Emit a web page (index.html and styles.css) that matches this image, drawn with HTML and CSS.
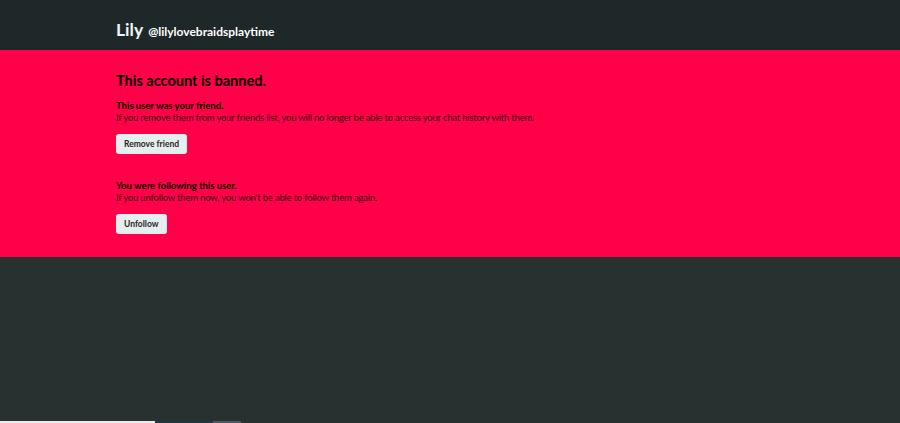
FILE: index.html
```html
<!DOCTYPE html>
<html lang="en">
<head>
    <meta charset="UTF-8">
    <meta name="viewport" content="width=device-width, initial-scale=1.0">
    <title>Lily - Banned</title>
    <link rel="stylesheet" href="styles.css">
</head>
<body>
    <div class="header">
        <div class="wrap">
            <span class="name">Lily</span>
            <span class="handle">@lilylovebraidsplaytime</span>
        </div>
    </div>

    <div class="banned">
        <div class="wrap">
            <h1>This account is banned.</h1>

            <div class="notice">
                <p class="notice-title">This user was your friend.</p>
                <p>If you remove them from your friends list, you will no longer be able to access your chat history with them.</p>
                <button class="action-btn">Remove friend</button>
            </div>

            <div class="notice">
                <p class="notice-title">You were following this user.</p>
                <p>If you unfollow them now, you won't be able to follow them again.</p>
                <button class="action-btn">Unfollow</button>
            </div>
        </div>
    </div>

    <div class="taskbar">
        <span class="tb-white"></span>
        <span class="tb-teal"></span>
        <span class="tb-grey"></span>
    </div>
</body>
</html>
```

FILE: styles.css
```css
* {
    margin: 0;
    padding: 0;
    box-sizing: border-box;
}

body {
    font-family: Lato, 'Liberation Sans', sans-serif;
    background: #293130;
    min-height: 100vh;
}

.wrap {
    padding-left: 116px;
}

.header {
    background: #1f2828;
    height: 50px;
    display: flex;
    align-items: center;
}

.header .wrap {
    display: flex;
    align-items: baseline;
    gap: 5px;
    padding-top: 8px;
}

.name {
    font-size: 17.5px;
    font-weight: 700;
    color: #eef6fb;
}

.handle {
    font-size: 12px;
    font-weight: 700;
    color: #ffffff;
}

.banned {
    background: #ff0049;
    height: 207px;
    padding-top: 22px;
    color: #000;
}

.banned h1 {
    font-size: 14.5px;
    font-weight: 700;
    line-height: 18px;
    margin-bottom: 10px;
}

.notice {
    line-height: 12px;
    margin-bottom: 26px;
}

.notice p {
    font-size: 9.5px;
    letter-spacing: -0.2px;
    color: #3a0016;
}

.notice .notice-title {
    font-size: 9.5px;
    letter-spacing: 0;
    font-weight: 700;
    color: #000;
}

.action-btn {
    display: block;
    margin-top: 10px;
    font-family: Lato, 'Liberation Sans', sans-serif;
    font-size: 8.5px;
    font-weight: 700;
    color: #1f2828;
    background: #e6eeee;
    border: none;
    border-radius: 3px;
    height: 20px;
    padding: 0 8px;
    cursor: pointer;
}

.taskbar {
    position: fixed;
    left: 0;
    right: 0;
    bottom: 0;
    height: 2px;
    display: flex;
}

.tb-white {
    width: 155px;
    background: #e8ecec;
}

.tb-teal {
    width: 58px;
    background: #1d3a44;
}

.tb-grey {
    width: 28px;
    background: #4a5a5e;
}
```
